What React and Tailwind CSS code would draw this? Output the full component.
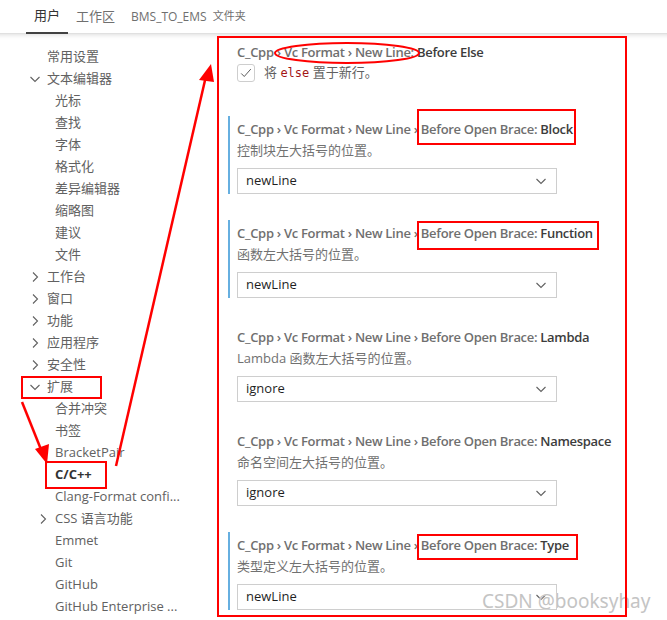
import React from 'react';

const font = { fontFamily: '"Open Sans", "Noto Sans CJK SC", sans-serif' };

const tree = [
    { label: '常用设置', level: 0 },
    { label: '文本编辑器', level: 0, chevron: 'down' },
    { label: '光标', level: 1 },
    { label: '查找', level: 1 },
    { label: '字体', level: 1 },
    { label: '格式化', level: 1 },
    { label: '差异编辑器', level: 1 },
    { label: '缩略图', level: 1 },
    { label: '建议', level: 1 },
    { label: '文件', level: 1 },
    { label: '工作台', level: 0, chevron: 'right' },
    { label: '窗口', level: 0, chevron: 'right' },
    { label: '功能', level: 0, chevron: 'right' },
    { label: '应用程序', level: 0, chevron: 'right' },
    { label: '安全性', level: 0, chevron: 'right' },
    { label: '扩展', level: 0, chevron: 'down' },
    { label: '合并冲突', level: 1 },
    { label: '书签', level: 1 },
    { label: 'BracketPair', level: 1 },
    { label: 'C/C++', level: 1, active: true },
    { label: 'Clang-Format confi...', level: 1 },
    { label: 'CSS 语言功能', level: 1, chevron: 'right' },
    { label: 'Emmet', level: 1 },
    { label: 'Git', level: 1 },
    { label: 'GitHub', level: 1 },
    { label: 'GitHub Enterprise ...', level: 1 },
];

const Chevron = ({ dir }) => (
    <svg className="w-4 h-4 text-[#616161]" viewBox="0 0 16 16" fill="none" stroke="currentColor" strokeWidth="1.1">
        {dir === 'down' ? <path d="M3.5 6l4.5 4.5L12.5 6" /> : <path d="M6 3.5l4.5 4.5L6 12.5" />}
    </svg>
);

const TreeRow = ({ item }) => (
    <div className={`flex items-center h-[22px] text-[13px] ${item.level === 0 ? 'pl-[27px]' : 'pl-[35px]'}`}>
        <div className="w-5 flex-shrink-0 flex items-center">{item.chevron && <Chevron dir={item.chevron} />}</div>
        <span className={`whitespace-nowrap ${item.active ? 'font-bold text-[#333333]' : 'text-[#616161]'}`}>{item.label}</span>
    </div>
);

const Title = ({ category, label }) => (
    <div className="h-[22px] leading-[22px] text-[13px] font-semibold tracking-[-0.3px] whitespace-nowrap">
        <span className="text-[#6f6f6f]">{category}</span>
        <span className="text-[#3c3c3c]">{label}</span>
    </div>
);

const Dropdown = ({ value }) => (
    <div className="mt-[6px] w-[320px] h-[26px] border border-[#cecece] flex items-center justify-between pl-[8px] pr-[7px] text-[13px] text-[#1f1f1f]">
        <span>{value}</span>
        <svg className="w-4 h-4 text-[#616161]" viewBox="0 0 16 16" fill="none" stroke="currentColor" strokeWidth="1.1">
            <path d="M3.5 6l4.5 4.5L12.5 6" />
        </svg>
    </div>
);

const braceSettings = [
    { label: 'Block', desc: '控制块左大括号的位置。', value: 'newLine', modified: true },
    { label: 'Function', desc: '函数左大括号的位置。', value: 'newLine', modified: true },
    { label: 'Lambda', desc: 'Lambda 函数左大括号的位置。', value: 'ignore' },
    { label: 'Namespace', desc: '命名空间左大括号的位置。', value: 'ignore' },
    { label: 'Type', desc: '类型定义左大括号的位置。', value: 'newLine', modified: true },
];

const Annotations = () => (
    <svg className="absolute inset-0 pointer-events-none" width="667" height="620" viewBox="0 0 667 620" fill="none">
        <g stroke="#ff0000" strokeWidth="2">
            <rect x="218" y="37" width="408" height="579" />
            <rect x="22" y="377" width="79" height="21" />
            <rect x="46" y="462" width="60" height="26" />
            <rect x="418" y="110" width="157" height="34" />
            <rect x="418" y="222" width="180" height="27" />
            <rect x="418" y="535" width="159" height="24" />
            <ellipse cx="347" cy="53" rx="72" ry="10" />
        </g>
        <g stroke="#ff0000" strokeWidth="2.5">
            <line x1="116" y1="466" x2="206" y2="76" />
            <line x1="22" y1="402" x2="42" y2="452" />
        </g>
        <g fill="#ff0000">
            <polygon points="211,64 199,80 214,82" />
            <polygon points="47,464 35,449 49,444" />
        </g>
    </svg>
);

export default function App() {
    return (
        <div className="relative w-[667px] h-[620px] overflow-hidden bg-white" style={font}>
            {/* tabs */}
            <div className="h-[34px] flex items-stretch pl-[26px] border-b border-[#e0e0e0]">
                <div className="px-2 flex items-center text-[13px] text-[#333333] border-b-2 border-[#424242] -mb-px">用户</div>
                <div className="px-2 flex items-center text-[13px] text-[#6f6f6f]">工作区</div>
                <div className="px-2 flex items-center gap-[6px] text-[12px] text-[#6f6f6f]">
                    BMS_TO_EMS<span className="text-[11px]">文件夹</span>
                </div>
            </div>

            <div className="flex shadow-[inset_0_7px_5px_-6px_#dddddd] pt-[5px]">
                {/* tree */}
                <div className="w-[228px] flex-shrink-0 pt-[7px]">
                    {tree.map((item, i) => <TreeRow key={i} item={item} />)}
                </div>

                {/* settings */}
                <div className="flex-1 flex flex-col gap-[26px]">
                    <div className="border-l-2 border-transparent pl-[7px] pt-[2px] pb-[7px]">
                        <Title category="C_Cpp › Vc Format › New Line: " label="Before Else" />
                        <div className="h-[20px] flex items-center gap-[9px] text-[13px] text-[#616161]">
                            <div className="w-[18px] h-[18px] border border-[#cecece] rounded-[3px] flex items-center justify-center">
                                <svg className="w-[14px] h-[14px] text-[#555555]" viewBox="0 0 16 16" fill="none" stroke="currentColor" strokeWidth="1.1">
                                    <path d="M2.5 8.5l3.5 3.5 7.5-8.5" />
                                </svg>
                            </div>
                            <span>
                                将 <span className="text-[12px] text-[#a31515]" style={{ fontFamily: '"DejaVu Sans Mono", monospace' }}>else</span> 置于新行。
                            </span>
                        </div>
                    </div>
                    {braceSettings.map(s => (
                        <div key={s.label} className={`border-l-2 pl-[7px] pt-[2px] ${s.modified ? 'border-[#66afe0]' : 'border-transparent'}`}>
                            <Title category="C_Cpp › Vc Format › New Line › Before Open Brace: " label={s.label} />
                            <div className="h-[22px] flex items-center text-[13px] text-[#717171]">{s.desc}</div>
                            <Dropdown value={s.value} />
                        </div>
                    ))}
                </div>
            </div>

            <div className="absolute left-[482px] top-[587px] text-[19px] text-[#c4c4c4] [text-shadow:0_0_1px_#ffffff]" style={{ fontFamily: '"Noto Sans", sans-serif' }}>
                CSDN @booksyhay
            </div>

            <Annotations />
        </div>
    );
}
